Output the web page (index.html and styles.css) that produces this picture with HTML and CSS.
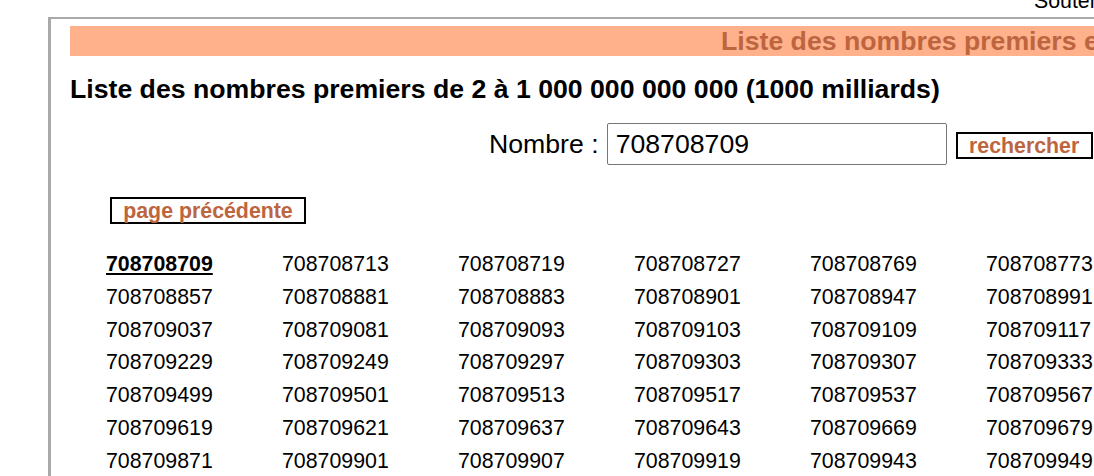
FILE: index.html
```html
<!DOCTYPE html>
<html lang="fr">
<head>
<meta charset="utf-8">
<title>Liste des nombres premiers</title>
<link rel="stylesheet" href="styles.css">
</head>
<body>
<div class="topline"><span class="support">Soutenir</span></div>
<div class="frame">
  <div class="banner"><span class="banner-text">Liste des nombres premiers et nombres premiers jumeaux</span></div>
  <h1 class="title">Liste des nombres premiers de 2 à 1 000 000 000 000 (1000 milliards)</h1>
  <div class="search">
    <label class="search-label" for="n">Nombre :</label>
    <input class="search-input" id="n" type="text" value="708708709">
    <button class="btn btn-search" type="button">rechercher</button>
  </div>
  <div class="nav">
    <button class="btn btn-prev" type="button">page précédente</button>
  </div>
  <div class="grid">
    <a class="num current">708708709</a><span class="num">708708713</span><span class="num">708708719</span><span class="num">708708727</span><span class="num">708708769</span><span class="num">708708773</span>
    <span class="num">708708857</span><span class="num">708708881</span><span class="num">708708883</span><span class="num">708708901</span><span class="num">708708947</span><span class="num">708708991</span>
    <span class="num">708709037</span><span class="num">708709081</span><span class="num">708709093</span><span class="num">708709103</span><span class="num">708709109</span><span class="num">708709117</span>
    <span class="num">708709229</span><span class="num">708709249</span><span class="num">708709297</span><span class="num">708709303</span><span class="num">708709307</span><span class="num">708709333</span>
    <span class="num">708709499</span><span class="num">708709501</span><span class="num">708709513</span><span class="num">708709517</span><span class="num">708709537</span><span class="num">708709567</span>
    <span class="num">708709619</span><span class="num">708709621</span><span class="num">708709637</span><span class="num">708709643</span><span class="num">708709669</span><span class="num">708709679</span>
    <span class="num">708709871</span><span class="num">708709901</span><span class="num">708709907</span><span class="num">708709919</span><span class="num">708709943</span><span class="num">708709949</span>
  </div>
</div>
</body>
</html>
```

FILE: styles.css
```css
html, body {
  margin: 0;
  padding: 0;
  background: #ffffff;
  overflow: hidden;
}
body {
  font-family: "Liberation Sans", Arial, sans-serif;
  color: #000;
  width: 1094px;
  height: 476px;
}
.topline {
  height: 17px;
  padding-left: 1034px;
  white-space: nowrap;
  overflow: visible;
}
.support {
  display: inline-block;
  font-size: 21.33px;
  line-height: 1;
  margin-top: -9px;
  vertical-align: top;
}
.frame {
  margin-left: 48px;
  width: 1300px;
  border-top: 2px solid #a9a9a9;
  border-left: 3px solid #a9a9a9;
  padding: 7px 0 0 19px;
}
.banner {
  background: #ffb18c;
  height: 30px;
  padding-left: 651px;
  white-space: nowrap;
  overflow: hidden;
}
.banner-text {
  font-weight: bold;
  font-size: 26.67px;
  line-height: 30px;
  color: #bd653f;
}
.title {
  margin: 18px 0 0 0;
  font-size: 26.67px;
  line-height: 30px;
  font-weight: bold;
}
.search {
  display: flex;
  align-items: center;
  margin-top: 19px;
  padding-left: 419px;
}
.search-label {
  font-size: 26.67px;
  margin-right: 8px;
}
.search-input {
  width: 340px;
  height: 42px;
  box-sizing: border-box;
  border: 1px solid #767676;
  border-radius: 2px;
  padding: 0 0 0 8px;
  font-family: "Liberation Sans", Arial, sans-serif;
  font-size: 26.67px;
  color: #000;
  margin: 0 9px 0 0;
}
.btn {
  background: #fff;
  border: 2px solid #000;
  font-family: "Liberation Sans", Arial, sans-serif;
  font-weight: bold;
  font-size: 21.33px;
  color: #bd653f;
  height: 27px;
  padding: 0;
  box-sizing: border-box;
  line-height: 22px;
  margin: 0;
}
.btn-search {
  width: 137px;
  margin-top: 3px;
}
.nav {
  margin-top: 32px;
  padding-left: 40px;
}
.btn-prev {
  width: 196px;
}
.grid {
  margin-top: 24px;
  padding-left: 36px;
  display: grid;
  grid-template-columns: repeat(6, 176px);
  grid-auto-rows: 32.8px;
  font-size: 21.33px;
  line-height: 32.8px;
}
.num {
  white-space: nowrap;
}
.current {
  font-weight: bold;
  text-decoration: underline;
  color: #000;
}
```
